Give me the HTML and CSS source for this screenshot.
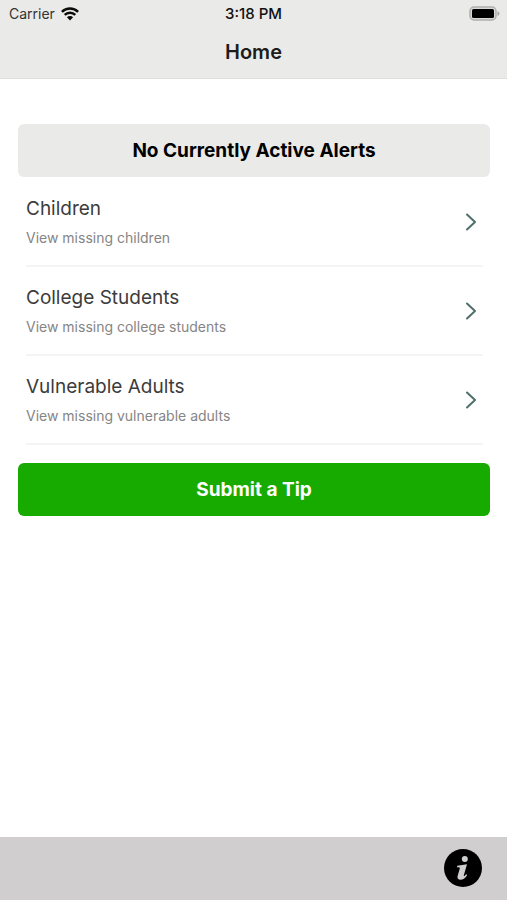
FILE: index.html
```html
<!DOCTYPE html>
<html lang="en">
<head>
<meta charset="utf-8">
<meta name="viewport" content="width=device-width, initial-scale=1">
<title>Home</title>
<link rel="stylesheet" href="styles.css">
</head>
<body>
<header class="top">
  <div class="status">
    <div class="carrier">
      <span>Carrier</span>
      <svg class="wifi" viewBox="0 0 18 14" width="18" height="14" aria-hidden="true">
        <path d="M.9 4.8a11.6 11.6 0 0 1 16.2 0M3.7 7.9a7.5 7.5 0 0 1 10.6 0" fill="none" stroke="#0b0b0b" stroke-width="2.4"/>
        <path d="M9 13.4 5.9 10.3a4.4 4.4 0 0 1 6.2 0z" fill="#0b0b0b"/>
      </svg>
    </div>
    <span class="time">3:18 PM</span>
    <svg class="battery" viewBox="0 0 32 16" width="32" height="16" aria-hidden="true">
      <rect x="1" y="1" width="26" height="13" rx="4" fill="#d9d9d8" stroke="#b0b0af" stroke-width="1.5"/>
      <rect x="3" y="3" width="22" height="9" rx="1.5" fill="#000"/>
      <path d="M28.5 5.2c2.6 1 2.6 3.8 0 4.8z" fill="#a5a5a4"/>
    </svg>
  </div>
  <h1 class="title">Home</h1>
</header>
<main class="content">
  <p class="banner">No Currently Active Alerts</p>
  <nav class="list">
    <a class="row" href="#children">
      <span class="text"><span class="name">Children</span><span class="hint">View missing children</span></span>
      <svg class="chevron" viewBox="0 0 12 18" width="12" height="18" aria-hidden="true"><path d="M2 1.5 10 9 2 16.5"/></svg>
    </a>
    <a class="row" href="#college">
      <span class="text"><span class="name">College Students</span><span class="hint">View missing college students</span></span>
      <svg class="chevron" viewBox="0 0 12 18" width="12" height="18" aria-hidden="true"><path d="M2 1.5 10 9 2 16.5"/></svg>
    </a>
    <a class="row" href="#adults">
      <span class="text"><span class="name">Vulnerable Adults</span><span class="hint">View missing vulnerable adults</span></span>
      <svg class="chevron" viewBox="0 0 12 18" width="12" height="18" aria-hidden="true"><path d="M2 1.5 10 9 2 16.5"/></svg>
    </a>
  </nav>
  <button class="submit" type="button">Submit a Tip</button>
</main>
<footer class="toolbar">
  <button class="info" type="button" aria-label="Information">
    <svg viewBox="0 0 38 38" width="38" height="38" aria-hidden="true">
      <circle cx="19" cy="19" r="19" fill="#000"/>
      <circle cx="20.8" cy="10" r="3" fill="#d0cece"/>
      <path d="M13.2 16.8 23 15.2 19.9 26C19.6 27.3 20 27.5 20.7 26.8L22.1 25.2 23.2 26C21 29.6 18.6 31 16 30.8 13.8 30.6 13.1 28.9 13.7 26.8L15.7 19.8C16 18.6 15.4 18.2 13 18.4z" fill="#d0cece"/>
    </svg>
  </button>
</footer>
</body>
</html>
```
FILE: styles.css
```css
* {
  box-sizing: border-box;
}

body {
  margin: 0;
  min-height: 100vh;
  display: flex;
  flex-direction: column;
  background: #fff;
  color: #000;
  font-family: Inter, "Liberation Sans", sans-serif;
}

.top {
  background: #eaeae8;
  border-bottom: 1px solid #dfdfdd;
}

.status {
  display: grid;
  grid-template-columns: 1fr auto 1fr;
  align-items: center;
  height: 27px;
  padding: 0 6px;
  font-size: 14px;
}

.carrier {
  display: flex;
  align-items: center;
  gap: 6px;
  padding-left: 3px;
  color: #333;
}

.time {
  font-size: 15px;
  font-weight: 500;
  color: #111;
}

.battery {
  justify-self: end;
}

.title {
  margin: 0;
  height: 51px;
  font-size: 20px;
  line-height: 50px;
  font-weight: 600;
  text-align: center;
  color: #1c1c1c;
}

.content {
  flex: 1;
  padding: 45px 17px 18px 18px;
}

.banner,
.submit {
  display: block;
  width: 100%;
  margin: 0;
  border: 0;
  border-radius: 6px;
  font-family: inherit;
  font-size: 19px;
  font-weight: 700;
  line-height: 53px;
  text-align: center;
}

.banner {
  background: #eaeae8;
}

.list {
  margin-bottom: 18px;
  padding: 1px 7px 0 8px;
}

.row {
  display: flex;
  align-items: center;
  justify-content: space-between;
  height: 89px;
  padding-right: 6px;
  border-bottom: 2px solid #f4f4f4;
  color: #3c3c3c;
  text-decoration: none;
}

.text {
  display: flex;
  flex-direction: column;
  gap: 5px;
}

.name {
  font-size: 19px;
  line-height: 28px;
}

.hint {
  font-size: 14px;
  line-height: 20px;
  color: #858585;
}

.chevron {
  fill: none;
  stroke: #4f6f6b;
  stroke-width: 2;
  stroke-linecap: round;
  stroke-linejoin: round;
}

.submit {
  padding: 0;
  background: #17ab00;
  color: #fff;
}

.toolbar {
  display: flex;
  align-items: center;
  justify-content: flex-end;
  height: 63px;
  padding: 0 25px 1px 0;
  background: #d0cece;
}

.info {
  padding: 0;
  border: 0;
  background: none;
}

.info svg {
  display: block;
}
```
